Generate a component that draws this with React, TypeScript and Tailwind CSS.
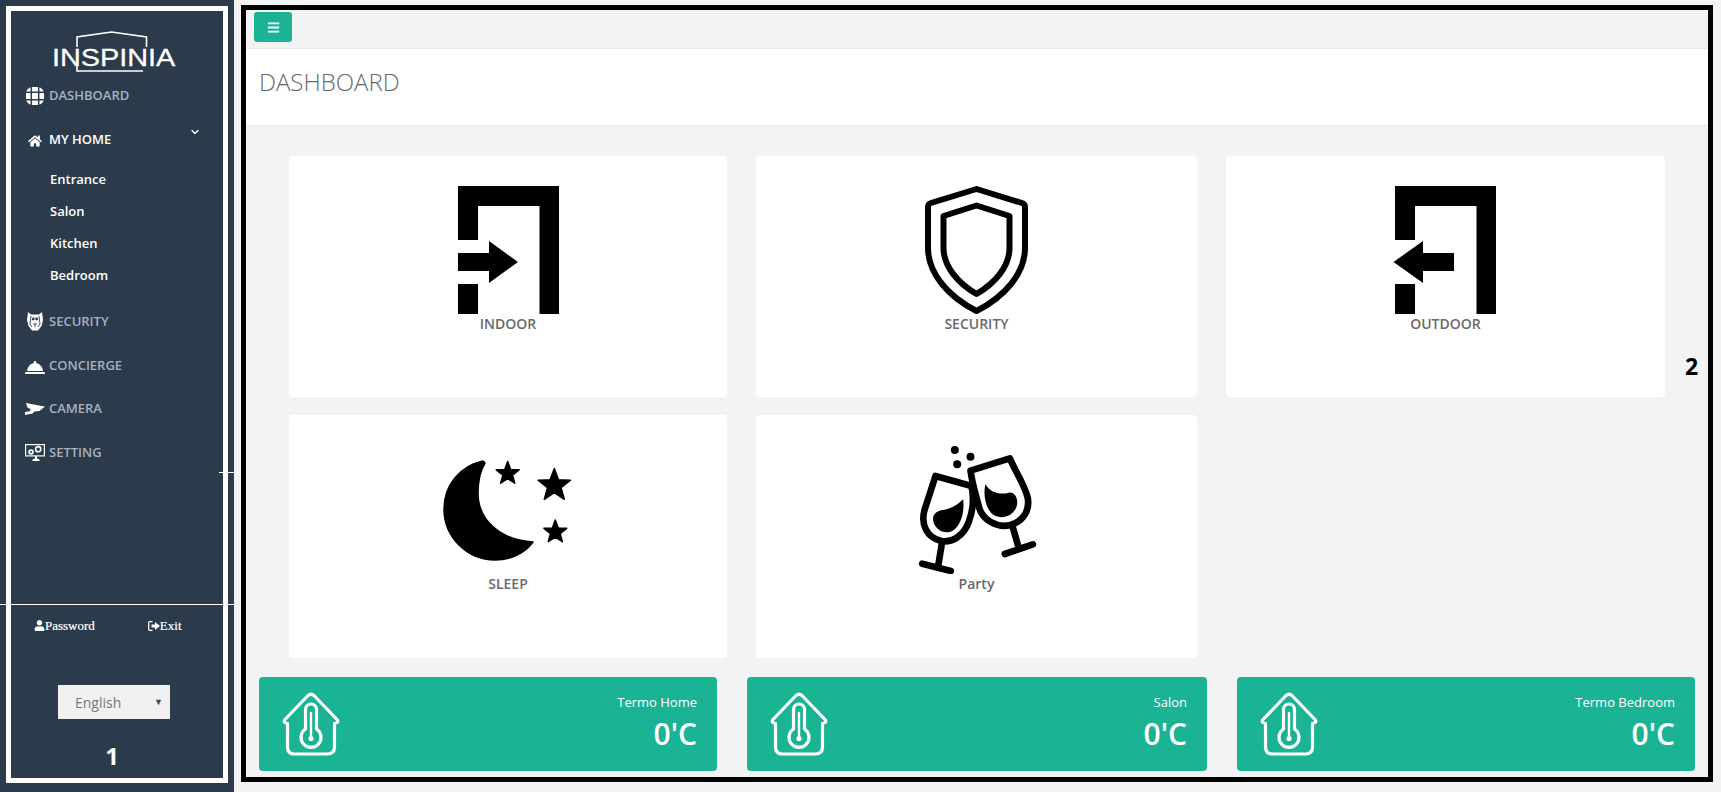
import React from "react";
import { ChevronDown } from "lucide-react";
import { FaBars, FaHome, FaUser } from "react-icons/fa";

const font = "font-['Open_Sans',sans-serif]";

function starPoints(cx: number, cy: number, r: number) {
  const pts: string[] = [];
  for (let i = 0; i < 10; i++) {
    const rad = i % 2 === 0 ? r : r * 0.42;
    const a = (-90 + i * 36) * (Math.PI / 180);
    pts.push(`${(cx + rad * Math.cos(a)).toFixed(2)},${(cy + rad * Math.sin(a)).toFixed(2)}`);
  }
  return pts.join(" ");
}

function DoorIn() {
  return (
    <svg width="101" height="128" viewBox="0 0 101 128" className="overflow-visible">
      <path d="M0 0H101V128H81.5V20H20V54H0ZM0 98H20V128H0Z" fill="#000" />
      <path d="M0 67H31V55L60 76L31 97V85H0Z" fill="#000" />
    </svg>
  );
}

function DoorOut() {
  return (
    <svg width="101" height="128" viewBox="0 0 101 128" className="overflow-visible">
      <path d="M0 0H101V128H81.5V20H20V54H0ZM0 98H20V128H0Z" fill="#000" />
      <path d="M59 67H28V55L-1.5 76L28 97V85H59Z" fill="#000" />
    </svg>
  );
}

function Shield() {
  return (
    <svg width="103" height="128" viewBox="0 0 103 128" fill="none" stroke="#000" strokeWidth="6" strokeLinejoin="round">
      <path d="M51.5 3L97 17Q100 18 100 21V62C100 88 79 111 51.5 125C24 111 3 88 3 62V21Q3 18 6 17Z" />
      <path d="M51.5 19.5L84.5 30V62C84.5 80 70.5 97 51.5 108C32.5 97 18.5 80 18.5 62V30Z" />
    </svg>
  );
}

function Sleep() {
  return (
    <svg width="136" height="128" viewBox="0 0 136 128">
      <path
        d="M43 15C20 20 4 39 4 63C4 91 27 114 55 114C71 114 85 107 93 96C60 94 38 74 38 47C38 36 40 25 45 17Z"
        fill="#000"
        stroke="#000"
        strokeWidth="1.5"
        strokeLinejoin="round"
      />
      <polygon points={starPoints(67.7, 27.5, 12)} fill="#000" stroke="#000" strokeWidth="1.5" strokeLinejoin="round" />
      <polygon points={starPoints(114.3, 39.5, 17)} fill="#000" stroke="#000" strokeWidth="1.5" strokeLinejoin="round" />
      <polygon points={starPoints(115.3, 86, 12)} fill="#000" stroke="#000" strokeWidth="1.5" strokeLinejoin="round" />
    </svg>
  );
}

function Party() {
  return (
    <svg width="126" height="128" viewBox="70.5 48 378 384" fill="none" stroke="#000" strokeWidth="20" strokeLinejoin="round" strokeLinecap="round">
      <path d="M135 138L243 168C250 200 248 240 235 275C220 320 180 340 150 332C110 322 90 285 102 240Z" />
      <path d="M240 122L358 85C375 125 405 170 412 205C418 245 395 275 360 285C320 295 275 270 265 230C255 190 245 160 240 122Z" />
      <path d="M155 335L143 408M95 401L181 423" />
      <path d="M365 285L385 355M343 372L427 343" />
      <path d="M218 208C222 240 215 280 190 300C170 315 140 305 130 280C122 255 135 245 155 240C180 238 200 225 218 208Z" fill="#000" stroke="none" />
      <path d="M285 163C300 190 330 195 355 188C375 185 385 210 378 230C370 255 340 268 315 258C290 248 275 200 285 163Z" fill="#000" stroke="none" />
      <circle cx="193" cy="60" r="12" fill="#000" stroke="none" />
      <circle cx="240" cy="80" r="12" fill="#000" stroke="none" />
      <circle cx="200" cy="103" r="12" fill="#000" stroke="none" />
    </svg>
  );
}

function ThermoHouse() {
  return (
    <svg width="58" height="64" viewBox="0 0 58 64" fill="none" stroke="#fff" strokeWidth="3.2" strokeLinejoin="round" strokeLinecap="round">
      <path d="M26 3.5Q29 1 32 3.5L55 27.5Q57.5 30.5 52.5 31.5V55Q52.5 62 45.5 62H12.5Q5.5 62 5.5 55V31.5Q0.5 30.5 3 27.5Z" />
      <path d="M23.5 37V17.5A5.5 5.5 0 0 1 34.5 17.5V37A10 10 0 1 1 23.5 37Z" />
      <path d="M29 21V47" strokeWidth="2.4" />
      <circle cx="29" cy="46.5" r="2.6" fill="#fff" stroke="none" />
    </svg>
  );
}

function GlobeIcon() {
  return (
    <svg width="18" height="18" viewBox="0 0 18 18">
      <rect width="18" height="18" rx="6.5" fill="#fff" />
      <path d="M0 5.3H18M0 12.7H18M5.3 0V18M12.7 0V18" stroke="#2b3b4b" strokeWidth="1.5" />
    </svg>
  );
}

function OwlIcon() {
  return (
    <svg width="16" height="19" viewBox="0 0 16 19">
      <path d="M1 0L4 2.5H12L15 0L16 8L14.5 14L11 18.5H5L1.5 14L0 8Z" fill="#fff" />
      <path d="M4 4L3 12L5 15M12 4L13 12L11 15" stroke="#2b3b4b" strokeWidth="0.9" fill="none" />
      <circle cx="6.3" cy="7" r="1.4" fill="#2b3b4b" />
      <circle cx="9.7" cy="7" r="1.4" fill="#2b3b4b" />
      <path d="M6 11H10L8 16Z" fill="#2b3b4b" opacity="0.6" />
    </svg>
  );
}

function BellIcon() {
  return (
    <svg width="20" height="13" viewBox="0 0 20 13" className="mt-[4px]">
      <circle cx="10" cy="1.2" r="1.2" fill="#fff" />
      <path d="M2 10C2.5 5.5 6 2 10 2C14 2 17.5 5.5 18 10Z" fill="#fff" />
      <path d="M0.5 11H19.5L20 13H0Z" fill="#fff" />
    </svg>
  );
}

function CameraIcon() {
  return (
    <svg width="20" height="12" viewBox="0 0 20 12" className="mt-[1px]">
      <path d="M1 0L18 3.3L20 3.6L14.5 8L9.5 8.5L7.5 10.5L0 12V9L4 8.6L6 6.5L2.5 4.5Z" fill="#fff" />
    </svg>
  );
}

function SettingIcon() {
  return (
    <svg width="20" height="17" viewBox="0 0 20 17" fill="none">
      <rect x="0.6" y="0.6" width="18.8" height="11.3" stroke="#fff" strokeWidth="1.2" />
      <circle cx="13.2" cy="5.2" r="2.6" stroke="#fff" strokeWidth="1.6" />
      <circle cx="6" cy="8" r="2.8" fill="#fff" />
      <circle cx="6" cy="8" r="1" fill="#2b3b4b" />
      <path d="M7.5 17H14.5V15.6L12 14.6V12H10V14.6L7.5 15.6Z" fill="#fff" />
    </svg>
  );
}

function ExitIcon() {
  return (
    <svg width="12" height="10" viewBox="0 0 12 10">
      <path d="M4.5 0.7H1.5Q0.7 0.7 0.7 1.5V8.5Q0.7 9.3 1.5 9.3H4.5" stroke="#fff" strokeWidth="1.3" fill="none" />
      <path d="M3.5 3.5H7V1L12 5L7 9V6.5H3.5Z" fill="#fff" />
    </svg>
  );
}

function Logo() {
  return (
    <div className="relative h-[41px] w-[131px]">
      <svg width="123" height="41" viewBox="0 0 123 41" fill="none" stroke="#fff" strokeWidth="1.6" className="absolute left-0 top-0">
        <path d="M25 16V6L59.5 1L94.5 6V16" />
        <path d="M25 31V40H91" />
      </svg>
      <span className="absolute left-0 top-[13px] origin-left scale-x-[1.2] whitespace-nowrap font-['Liberation_Sans',sans-serif] text-[24px] leading-[27px] text-white [-webkit-text-stroke:0.3px_white]">
        INSPINIA
      </span>
    </div>
  );
}

function NavRow({ icon, label, active }: { icon: React.ReactNode; label: string; active?: boolean }) {
  return (
    <div className={`flex h-[43.5px] items-center gap-[4px] pl-[14px] text-[13px] font-semibold ${active ? "text-white" : "text-[#a7b1c2]"}`}>
      <span className="flex w-[20px] justify-center">{icon}</span>
      <span>{label}</span>
      {active && <ChevronDown size={12} strokeWidth={2.5} className="mb-[14px] ml-auto mr-[22px] text-white" />}
    </div>
  );
}

function SubRow({ label }: { label: string }) {
  return <div className="flex h-[32px] items-center pl-[39px] text-[13px] font-semibold text-white">{label}</div>;
}

function Tile({ label, icon, top }: { label: string; icon: React.ReactNode; top?: boolean }) {
  return (
    <div className={`flex flex-col items-center rounded bg-white ${top ? "pt-[30px]" : "pt-[31px]"}`}>
      <div className="flex h-[128px] items-center justify-center">{icon}</div>
      <div className="-mt-[1px] flex h-[20px] items-center text-[14px] font-semibold text-[#676a6c]">{label}</div>
    </div>
  );
}

function Termo({ label }: { label: string }) {
  return (
    <div className="flex items-start justify-between rounded bg-[#1ab394] pl-[23px] pr-[20px] pt-[15px] text-white">
      <ThermoHouse />
      <div className="flex flex-col items-end">
        <div className="h-[20px] text-[13px] leading-[20px]">{label}</div>
        <div className="mt-[1px] text-[30px] font-semibold leading-[41px]">0'C</div>
      </div>
    </div>
  );
}

export default function App() {
  return (
    <div className={`relative flex h-[792px] w-full overflow-hidden bg-[#f3f3f4] ${font}`}>
      <aside className="h-full w-[234px] shrink-0 bg-[#2b3b4b] p-[6px] pb-[9px]">
        <div className="flex h-full flex-col border-[5px] border-white">
          <div className="flex justify-center pt-[20px]">
            <Logo />
          </div>
          <div className="mt-[2px]">
            <NavRow icon={<GlobeIcon />} label="DASHBOARD" />
            <NavRow icon={<FaHome size={14} color="#fff" className="mt-[3px]" />} label="MY HOME" active />
            <div className="mt-[2.5px] pb-[8.5px]">
              <SubRow label="Entrance" />
              <SubRow label="Salon" />
              <SubRow label="Kitchen" />
              <SubRow label="Bedroom" />
            </div>
            <NavRow icon={<OwlIcon />} label="SECURITY" />
            <NavRow icon={<BellIcon />} label="CONCIERGE" />
            <NavRow icon={<CameraIcon />} label="CAMERA" />
            <NavRow icon={<SettingIcon />} label="SETTING" />
          </div>
          <div className="mt-auto flex h-[174px] flex-col">
            <div className="flex h-[43px] items-center font-['Liberation_Serif',serif] text-[13px] text-white [-webkit-text-stroke:0.2px_white]">
              <span className="ml-[23px] flex items-center">
                <FaUser size={11} color="#fff" />
                {"Password"}
              </span>
              <span className="ml-[53px] flex items-center">
                <ExitIcon />
                {"Exit"}
              </span>
            </div>
            <div className="ml-[47px] mt-[38px] flex h-[34px] w-[112px] items-center justify-between bg-[#f1f1f2] pl-[17px] pr-[7px] text-[14px] text-[#777]">
              <span>English</span>
              <span className="text-[9px] text-[#444]">▼</span>
            </div>
            <div className="mt-[19px] flex h-[36px] items-center justify-center pr-[10px] text-[24px] font-bold text-white">1</div>
          </div>
        </div>
      </aside>

      <main className="ml-[7px] mt-[5px] flex h-[777px] w-[1472px] shrink-0 flex-col border-[5px] border-black">
        <div className="h-[39px] shrink-0 border-b border-[#e7eaec] pl-[8px] pt-[2px]">
          <button className="flex h-[30px] w-[38px] items-center justify-center rounded-[3px] bg-[#1ab394] text-white">
            <FaBars size={13} />
          </button>
        </div>
        <div className="flex h-[77px] shrink-0 items-center border-b border-[#e7eaec] bg-white pb-[12px] pl-[13px]">
          <h2 className="text-[24px] font-light leading-[33px] text-[#676a6c]">DASHBOARD</h2>
        </div>
        <div className="ml-[43px] mt-[30px] grid shrink-0 grid-cols-[438px_441px_439px] grid-rows-[241px_243px] gap-x-[29px] gap-y-[18px]">
          <Tile top label="INDOOR" icon={<DoorIn />} />
          <Tile top label="SECURITY" icon={<Shield />} />
          <Tile top label="OUTDOOR" icon={<DoorOut />} />
          <Tile label="SLEEP" icon={<Sleep />} />
          <Tile label="Party" icon={<Party />} />
        </div>
        <div className="ml-[13px] mt-[19px] grid h-[94px] shrink-0 grid-cols-[458px_460px_458px] gap-x-[30px]">
          <Termo label="Termo Home" />
          <Termo label="Salon" />
          <Termo label="Termo Bedroom" />
        </div>
      </main>

      <div className="absolute left-0 top-[604px] h-px w-[236px] bg-white" />
      <div className="absolute left-[219px] top-[472px] h-px w-[21px] bg-white" />
      <div className="absolute left-[1685px] top-[351px] text-[23px] font-bold leading-[30px] text-black">2</div>
    </div>
  );
}
